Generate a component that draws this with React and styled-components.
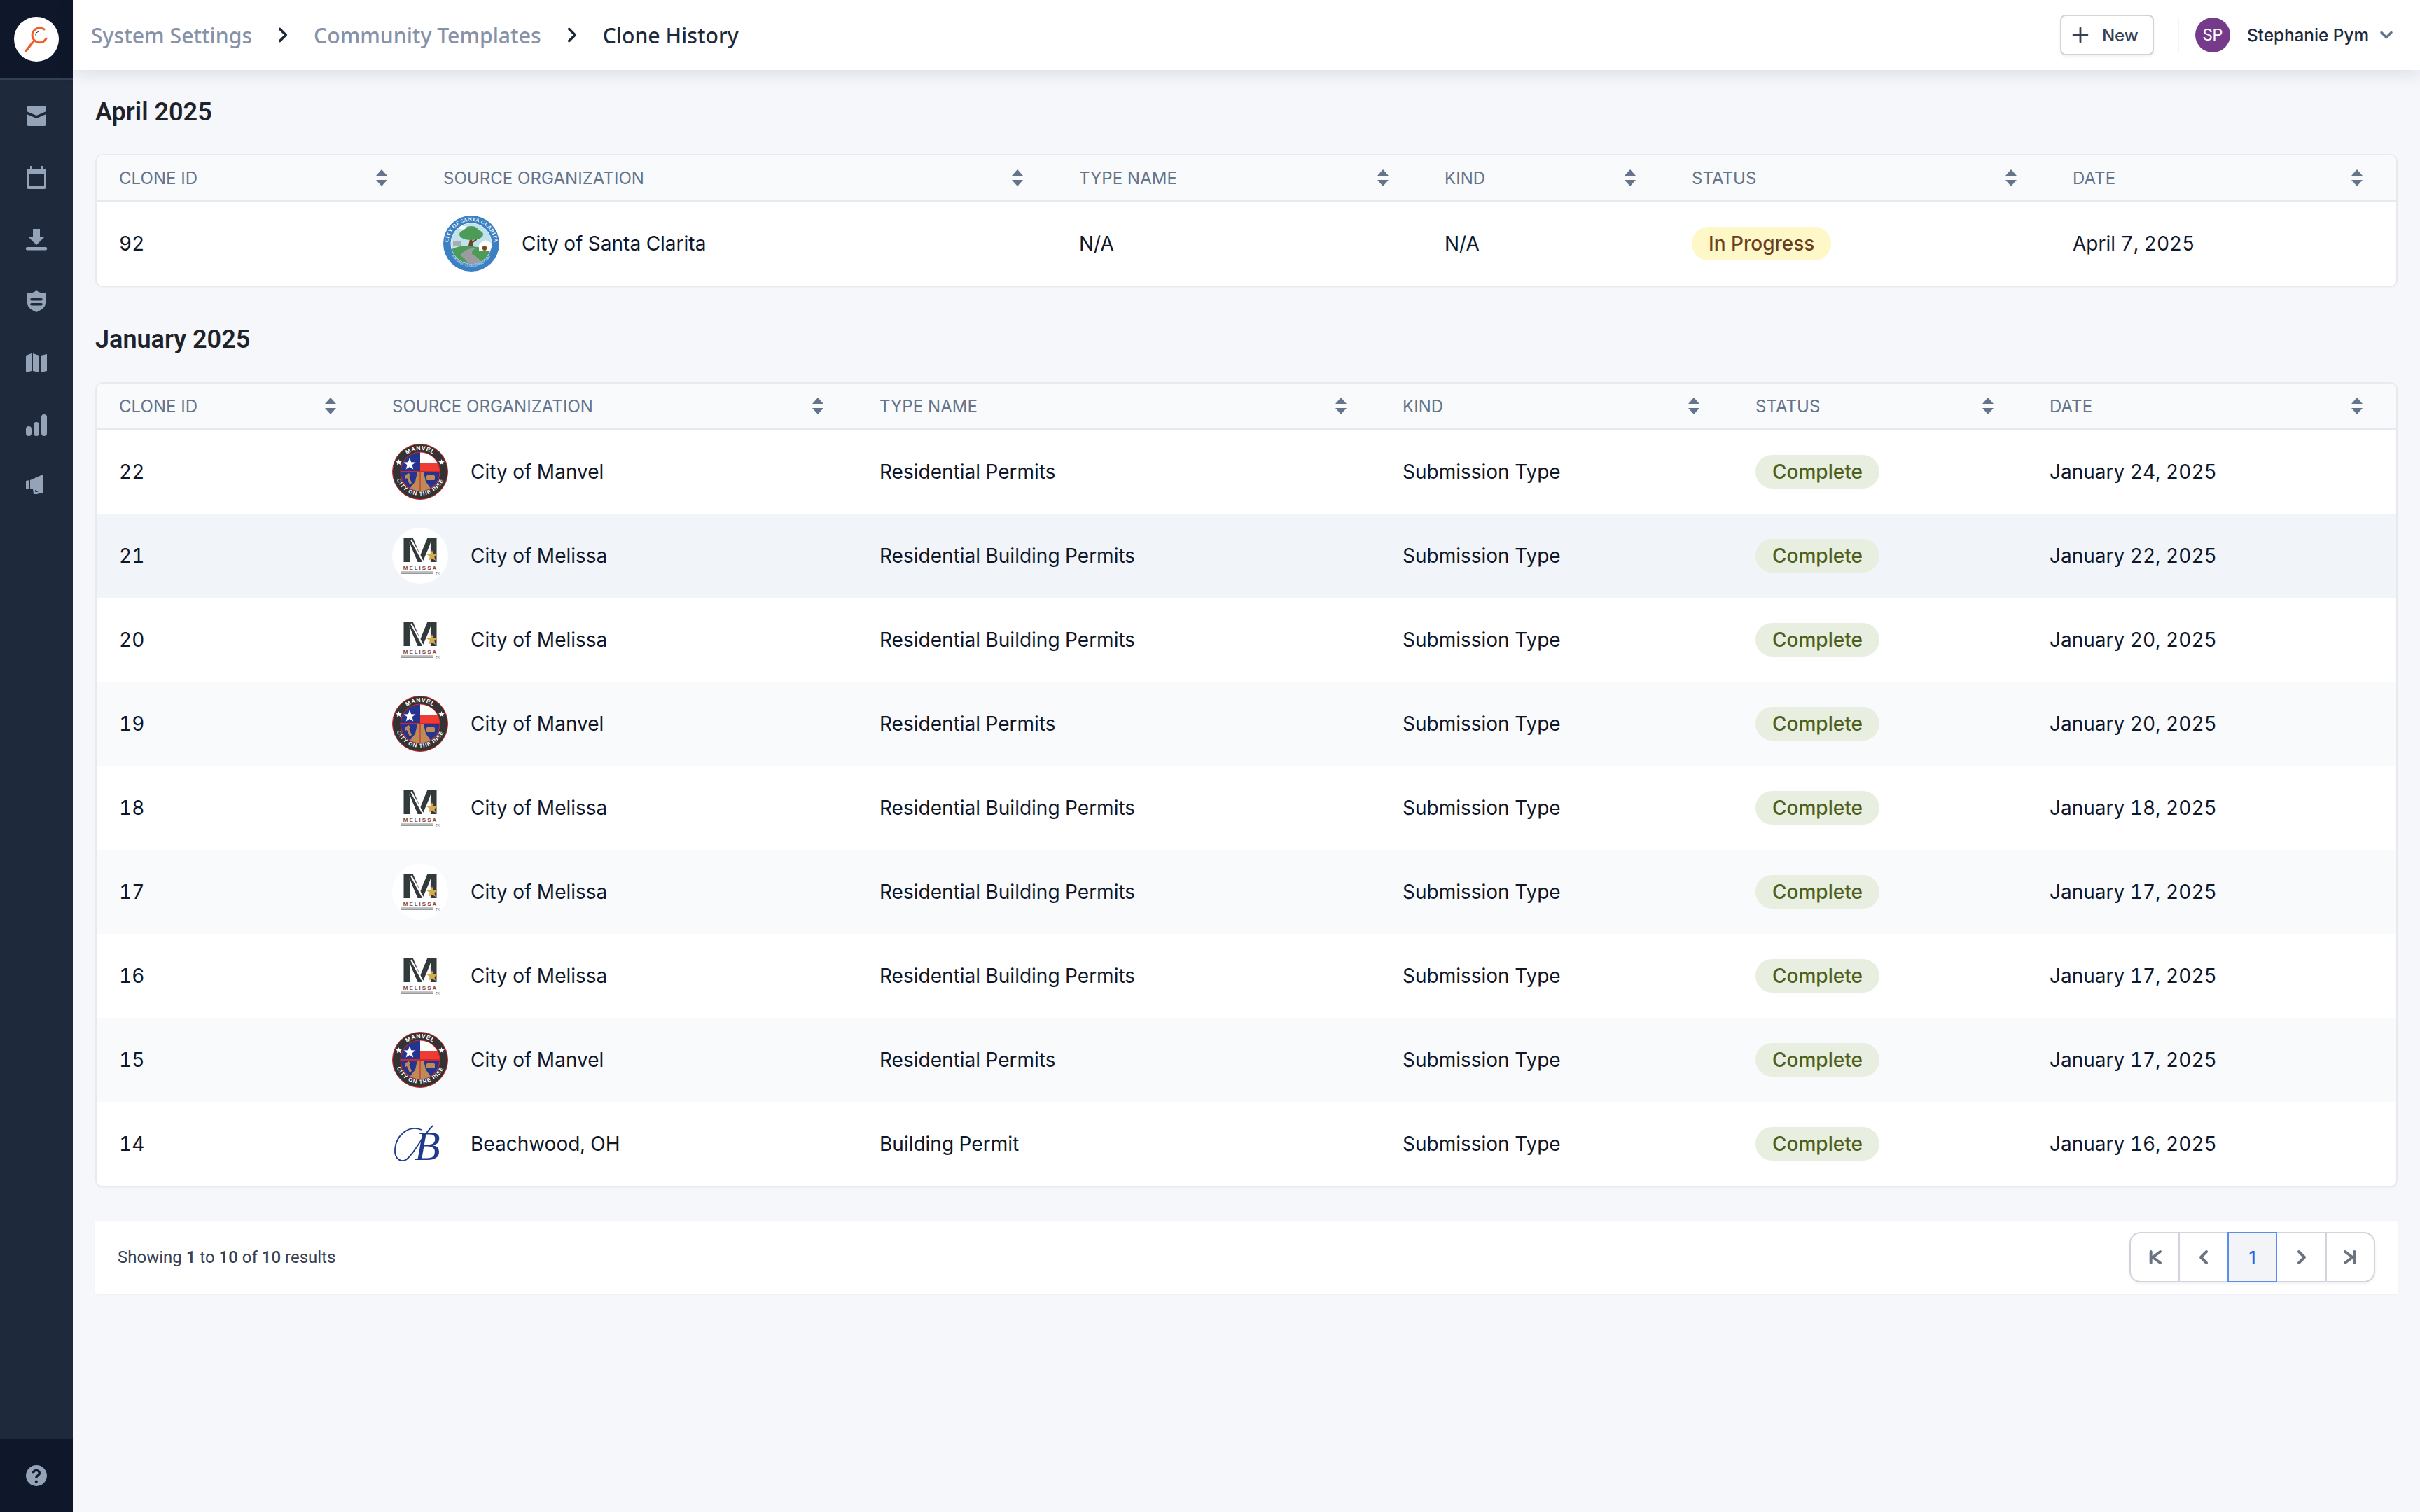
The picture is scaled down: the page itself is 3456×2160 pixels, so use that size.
import React from 'react';
import styled, { createGlobalStyle } from 'styled-components';
import { Plus, ChevronDown, ChevronRight, ChevronLeft } from 'lucide-react';

const Global = createGlobalStyle`
  * { box-sizing: border-box; }
  html, body { margin: 0; padding: 0; height: 100%; }
  body { background: #f5f7fb; font-family: Inter, "Liberation Sans", sans-serif; color: #0f172a; }
`;

const Shell = styled.div`
  display: flex;
  width: 3456px;
  height: 2160px;
  overflow: hidden;
`;

const Sidebar = styled.aside`
  width: 104px;
  flex: none;
  display: flex;
  flex-direction: column;
  background: #1e293b;
`;

const SideTop = styled.div`
  height: 114px;
  flex: none;
  display: flex;
  justify-content: center;
  padding-top: 24px;
  background: #0f172a;
  border-bottom: 2px solid #334155;
`;

const LogoDisc = styled.div`
  width: 64px;
  height: 64px;
  border-radius: 50%;
  background: #fff;
`;

const SideNav = styled.nav`
  flex: 1;
  display: flex;
  flex-direction: column;
  align-items: center;
  gap: 48px;
  padding-top: 32px;
`;

const SideIcon = styled.svg`
  width: 40px;
  height: 40px;
  display: block;
  fill: #94a3b8;
`;

const SideBottom = styled.div`
  height: 104px;
  flex: none;
  display: flex;
  align-items: center;
  justify-content: center;
  background: #0f172a;
`;

const Main = styled.div`
  flex: 1;
  min-width: 0;
  display: flex;
  flex-direction: column;
`;

const TopBar = styled.header`
  height: 100px;
  flex: none;
  display: flex;
  align-items: center;
  padding: 0 34px 0 26px;
  background: #fff;
  box-shadow: 0 4px 24px rgba(15, 23, 42, 0.12);
  position: relative;
  z-index: 1;
`;

const Crumb = styled.span`
  font-family: "Noto Sans", sans-serif;
  font-size: 30.2px;
  font-weight: 500;
  color: ${p => (p.$current ? '#1e293b' : '#8792a8')};
`;

const CrumbSep = styled(ChevronRight)`
  width: 34px;
  height: 34px;
  margin: 0 27px;
  color: #1e293b;
  stroke-width: 2.6;
  flex: none;
`;

const Spacer = styled.div`
  flex: 1;
`;

const NewButton = styled.button`
  width: 134px;
  height: 58px;
  display: flex;
  align-items: center;
  padding: 0 0 0 10px;
  gap: 14px;
  background: #fff;
  border: 2px solid #d1d5db;
  border-radius: 8px;
  box-shadow: 0 2px 4px rgba(15, 23, 42, 0.06);
  font-family: Inter, sans-serif;
  font-size: 24px;
  font-weight: 500;
  color: #374151;
`;

const Divider = styled.div`
  width: 2px;
  height: 50px;
  background: #f3f4f6;
  margin: 0 23px 0 34px;
`;

const Avatar = styled.div`
  width: 50px;
  height: 50px;
  border-radius: 50%;
  background: #763a8b;
  color: #fff;
  font-family: Roboto, sans-serif;
  font-size: 23px;
  display: flex;
  align-items: center;
  justify-content: center;
`;

const UserName = styled.span`
  font-family: Inter, sans-serif;
  font-size: 24.3px;
  font-weight: 500;
  color: #1e293b;
  margin-left: 24px;
`;

const UserChevron = styled(ChevronDown)`
  width: 28px;
  height: 28px;
  color: #64748b;
  stroke-width: 3;
  margin-left: 11px;
`;

const Content = styled.main`
  flex: 1;
  padding: 0 32px;
  display: flex;
  flex-direction: column;
`;

const Heading = styled.h2`
  margin: 0;
  height: ${p => p.$h}px;
  padding-top: ${p => p.$top}px;
  font-family: Roboto, sans-serif;
  font-size: 36px;
  font-weight: 600;
  line-height: 42px;
  color: #1f2329;
`;

const Card = styled.section`
  background: #fff;
  border-radius: 8px;
  box-shadow: 0 0 0 2px #e8eaef, 0 2px 4px rgba(15, 23, 42, 0.06);
  margin: 0 2px;
  overflow: hidden;
`;

const Row = styled.div`
  display: grid;
  grid-template-columns: ${p => p.$cols};
  height: 120px;
  align-items: center;
  background: ${p => p.$bg || '#fff'};
`;

const HeadRow = styled.div`
  display: grid;
  grid-template-columns: ${p => p.$cols};
  height: 66px;
  align-items: center;
  background: #f8fafc;
  border-bottom: 2px solid #e5e9f0;
`;

const HeadCell = styled.div`
  display: flex;
  align-items: center;
  justify-content: space-between;
  padding: 0 44px 0 32px;
  font-family: Inter, sans-serif;
  font-size: 24px;
  font-weight: 400;
  letter-spacing: 0.05px;
  color: #64748b;
  text-transform: uppercase;
`;

const Cell = styled.div`
  display: flex;
  align-items: center;
  gap: 32px;
  padding: 0 32px;
  font-family: Inter, sans-serif;
  font-size: 28px;
  font-variant-numeric: tabular-nums;
  color: #0f172a;
`;

const Pill = styled.span`
  display: inline-flex;
  align-items: center;
  height: 48px;
  padding: 0 24px;
  border-radius: 24px;
  font-weight: 500;
  background: ${p => (p.$kind === 'progress' ? '#fef7c8' : '#e8eee0')};
  color: ${p => (p.$kind === 'progress' ? '#6b3f1d' : '#4d5f1c')};
`;

const LogoSvg = styled.svg`
  width: 80px;
  height: 80px;
  flex: none;
  display: block;
`;

const Footer = styled.div`
  height: 104px;
  margin-top: 50px;
  display: flex;
  align-items: center;
  justify-content: space-between;
  padding: 0 32px;
  background: #fff;
  box-shadow: 0 1px 3px rgba(15, 23, 42, 0.06);
`;

const Showing = styled.p`
  margin: 0;
  font-family: Roboto, sans-serif;
  font-size: 24px;
  color: #374151;
  b { font-weight: 500; }
`;

const Pager = styled.div`
  display: flex;
  height: 72px;
  border: 2px solid #d1d5db;
  border-radius: 16px;
  background: #fff;
  box-shadow: 0 2px 4px rgba(15, 23, 42, 0.06);
`;

const PageBtn = styled.div`
  width: ${p => p.$w}px;
  display: flex;
  align-items: center;
  justify-content: center;
  color: #6b7280;
  border-left: ${p => (p.$bar ? '2px solid #d1d5db' : 'none')};
`;

const PageCurrent = styled.div`
  width: 71px;
  margin: -2px 0;
  display: flex;
  align-items: center;
  justify-content: center;
  background: #f3f4f8;
  border: 2px solid #5b8def;
  color: #2563eb;
  font-family: Inter, sans-serif;
  font-size: 24px;
  font-weight: 500;
`;

const PageGlyph = styled.svg`
  width: 32px;
  height: 32px;
  fill: none;
  stroke: currentColor;
  stroke-width: 3;
  stroke-linecap: round;
  stroke-linejoin: round;
`;

const SortSvg = styled.svg`
  width: 24px;
  height: 26px;
  fill: #64748b;
  flex: none;
`;

const Sort = () => (
  <SortSvg viewBox="0 0 24 26"><path d="M12 1 L20 10 H4 Z M12 25 L4 16 H20 Z" /></SortSvg>
);

const Clarita = () => (
  <LogoSvg viewBox="0 0 80 80">
    <defs>
      <path id="cl-top" d="M9 52 A33 33 0 1 1 71 52" />
      <path id="cl-bot" d="M8 48 A33 33 0 0 0 72 48" />
      <clipPath id="cl-in"><circle cx="40" cy="40" r="29" /></clipPath>
    </defs>
    <circle cx="40" cy="40" r="40" fill="#3a80c3" />
    <circle cx="40" cy="40" r="29.5" fill="#fff" />
    <circle cx="40" cy="40" r="29" fill="#bfe2ee" />
    <g clipPath="url(#cl-in)">
      <path d="M8 50 Q24 41 42 44 T74 48 V74 H8Z" fill="#4c9c58" />
      <path d="M24 57 Q30 47 48 46 Q38 51 42 56 Q52 60 58 72 H36 Q34 62 24 57Z" fill="#9b9ba0" />
      <rect x="14" y="37" width="11" height="6" fill="#a7adb0" />
      <path d="M38 34 h3 l2 9 h-7 Z M41 37 L48 33 L48 35 L41 40Z" fill="#6b4423" />
      <ellipse cx="40" cy="27" rx="17" ry="8" fill="#4c9c58" />
      <ellipse cx="40" cy="21" rx="10" ry="6" fill="#4c9c58" />
      <rect x="51" y="41" width="19" height="9" fill="#fff" />
      <path d="M50 41 L60 35 L72 41Z" fill="#fff" />
      <rect x="56" y="43" width="6" height="7" rx="3" fill="#7a4a1f" />
      <ellipse cx="27" cy="17" rx="6" ry="2.4" fill="#fff" />
    </g>
    <text fontFamily="Liberation Serif, serif" fontSize="7.5" fontWeight="700" fill="#fff" letterSpacing=".3"><textPath href="#cl-top" startOffset="50%" textAnchor="middle">CITY OF SANTA CLARITA</textPath></text>
    <text fontFamily="Liberation Sans, sans-serif" fontSize="4.4" fill="#e5f2fb"><textPath href="#cl-bot" startOffset="50%" textAnchor="middle">FOUNDED 15 DECEMBER 1987</textPath></text>
  </LogoSvg>
);

const Manvel = () => (
  <LogoSvg viewBox="0 0 80 80">
    <defs>
      <path id="mv-top" d="M9 40 A31 31 0 0 1 71 40" />
      <path id="mv-bot" d="M4 38 A36 36 0 0 0 76 38" />
      <clipPath id="mv-in"><circle cx="40" cy="40" r="27.5" /></clipPath>
    </defs>
    <circle cx="40" cy="40" r="39.5" fill="#333" stroke="#d3262d" strokeWidth="1" />
    <circle cx="40" cy="40" r="28.5" fill="#d3262d" />
    <g clipPath="url(#mv-in)">
      <rect x="12" y="12" width="28" height="27" fill="#25358f" />
      <rect x="40" y="12" width="28" height="15" fill="#fff" />
      <rect x="40" y="27" width="28" height="12" fill="#ee3b34" />
      <rect x="12" y="41" width="56" height="28" fill="#25358f" />
      <path d="M36 41 H45 L48 54 L58 68 H22 L33 54Z" fill="#c08a58" />
      <rect x="39.4" y="41" width="1.2" height="28" fill="#c8322b" />
      <path d="M18 45 l6 -3 2 4 -2 1 4 9 -3 2 -4 -9 -2 1Z" fill="#c08a58" />
      <rect x="49" y="45" width="12" height="7" rx="1.5" fill="#c08a58" />
      <polygon points="25,20 27.2,26.2 33.6,26.4 28.5,30.3 30.3,36.5 25,32.9 19.7,36.5 21.5,30.3 16.4,26.4 22.8,26.2" fill="#fff" />
    </g>
    <rect x="12" y="39" width="56" height="2" fill="#d3262d" />
    <text fontFamily="Liberation Sans, sans-serif" fontSize="8.5" fontWeight="700" fill="#fff" letterSpacing=".8"><textPath href="#mv-top" startOffset="50%" textAnchor="middle">MANVEL</textPath></text>
    <text fontFamily="Liberation Sans, sans-serif" fontSize="7.8" fontWeight="700" fill="#fff" letterSpacing="1"><textPath href="#mv-bot" startOffset="50%" textAnchor="middle">CITY ON THE RISE</textPath></text>
    <polygon points="9.5,22 10.7,25 13.9,25.2 11.4,27.2 12.3,30.3 9.5,28.5 6.7,30.3 7.6,27.2 5.1,25.2 8.3,25" fill="#fff" />
    <polygon points="70.5,22 71.7,25 74.9,25.2 72.4,27.2 73.3,30.3 70.5,28.5 67.7,30.3 68.6,27.2 66.1,25.2 69.3,25" fill="#fff" />
  </LogoSvg>
);

const Melissa = () => (
  <LogoSvg viewBox="0 0 80 80">
    <circle cx="40" cy="40" r="40" fill="#fff" />
    <text x="40" y="49" textAnchor="middle" fontFamily="Liberation Sans, sans-serif" fontWeight="700" fontSize="50" fill="#333a3c" textLength="56" lengthAdjust="spacingAndGlyphs">M</text>
    <path d="M27 17 L45 50" stroke="#fff" strokeWidth="2.2" />
    <polygon points="57,32 59,37.6 65,37.8 60.3,41.4 62,47 57,43.8 52,47 53.7,41.4 49,37.8 55,37.6" fill="#d9a94e" />
    <text x="40.5" y="59.5" textAnchor="middle" fontFamily="Liberation Sans, sans-serif" fontSize="8" fontWeight="700" letterSpacing="2" fill="#86463f">MELISSA</text>
    <rect x="12" y="62.5" width="46" height="1.1" fill="#8a8f90" />
    <rect x="12" y="64.8" width="46" height="1.1" fill="#8a8f90" />
    <text x="65" y="67" textAnchor="middle" fontFamily="Liberation Sans, sans-serif" fontSize="4.5" fill="#666">TX</text>
  </LogoSvg>
);

const Beachwood = () => (
  <LogoSvg viewBox="0 0 80 80">
    <circle cx="40" cy="40" r="40" fill="#fff" />
    <path d="M42 20 C22 12 5 30 4 48 C3 62 14 69 23 60 C34 50 42 30 58 14" fill="none" stroke="#1e3a8a" strokeWidth="1.8" />
    <text x="32" y="63" fontFamily="Liberation Serif, serif" fontStyle="italic" fontSize="60" fill="#1e3a8a">B</text>
  </LogoSvg>
);

const LOGOS = { clarita: Clarita, manvel: Manvel, melissa: Melissa, beachwood: Beachwood };
const HEAD = ['Clone ID', 'Source Organization', 'Type Name', 'Kind', 'Status', 'Date'];

const april = {
  cols: '463px 908px 522px 353px 544px 1fr',
  rows: [
    { id: 92, logo: 'clarita', org: 'City of Santa Clarita', type: 'N/A', kind: 'N/A', status: 'In Progress', date: 'April 7, 2025' },
  ],
};

const sub = 'Submission Type';
const rbp = 'Residential Building Permits';
const january = {
  cols: '390px 696px 747px 504px 420px 1fr',
  rows: [
    { id: 22, logo: 'manvel', org: 'City of Manvel', type: 'Residential Permits', kind: sub, status: 'Complete', date: 'January 24, 2025' },
    { id: 21, logo: 'melissa', org: 'City of Melissa', type: rbp, kind: sub, status: 'Complete', date: 'January 22, 2025', bg: '#f1f5f9' },
    { id: 20, logo: 'melissa', org: 'City of Melissa', type: rbp, kind: sub, status: 'Complete', date: 'January 20, 2025' },
    { id: 19, logo: 'manvel', org: 'City of Manvel', type: 'Residential Permits', kind: sub, status: 'Complete', date: 'January 20, 2025', bg: '#f8fafc' },
    { id: 18, logo: 'melissa', org: 'City of Melissa', type: rbp, kind: sub, status: 'Complete', date: 'January 18, 2025' },
    { id: 17, logo: 'melissa', org: 'City of Melissa', type: rbp, kind: sub, status: 'Complete', date: 'January 17, 2025', bg: '#f8fafc' },
    { id: 16, logo: 'melissa', org: 'City of Melissa', type: rbp, kind: sub, status: 'Complete', date: 'January 17, 2025' },
    { id: 15, logo: 'manvel', org: 'City of Manvel', type: 'Residential Permits', kind: sub, status: 'Complete', date: 'January 17, 2025', bg: '#f8fafc' },
    { id: 14, logo: 'beachwood', org: 'Beachwood, OH', type: 'Building Permit', kind: sub, status: 'Complete', date: 'January 16, 2025' },
  ],
};

const DataTable = ({ data }) => (
  <Card>
    <HeadRow $cols={data.cols}>
      {HEAD.map(h => <HeadCell key={h}>{h}<Sort /></HeadCell>)}
    </HeadRow>
    {data.rows.map(r => {
      const Logo = LOGOS[r.logo];
      return (
        <Row key={r.id} $cols={data.cols} $bg={r.bg}>
          <Cell>{r.id}</Cell>
          <Cell><Logo />{r.org}</Cell>
          <Cell>{r.type}</Cell>
          <Cell>{r.kind}</Cell>
          <Cell><Pill $kind={r.status === 'Complete' ? 'done' : 'progress'}>{r.status}</Pill></Cell>
          <Cell>{r.date}</Cell>
        </Row>
      );
    })}
  </Card>
);

const SIDE_ICONS = [
  'M6 8a3 3 0 0 1 3-3h22a3 3 0 0 1 3 3v5l-14 6-14-6V8Zm0 9 14 6 14-6v14a3 3 0 0 1-3 3H9a3 3 0 0 1-3-3V17Z',
  'M11 3h3v4h12V3h3v4h2a3 3 0 0 1 3 3v23a3 3 0 0 1-3 3H9a3 3 0 0 1-3-3V10a3 3 0 0 1 3-3h2V3ZM9 15v17h22V15H9Z',
  'M15 5h10v11h7L20 28 8 16h7V5ZM7 31h26a2.2 2.2 0 0 1 0 4.4H7A2.2 2.2 0 0 1 7 31Z',
  'M20 5c4 3 9 4 13 4v14c0 6-6 10-13 13C13 33 7 29 7 23V9c4 0 9-1 13-4Zm-7 11a1.8 1.8 0 0 0 0 3.6h14a1.8 1.8 0 0 0 0-3.6H13Zm0 7a1.8 1.8 0 0 0 0 3.6h14a1.8 1.8 0 0 0 0-3.6H13Z',
  'M5 10l8-3v25l-8 2V10Zm10-3 9 3v24l-9-2V7Zm11 3 9-2v24l-9 2V10Z',
  'M9 23a4 4 0 0 1 4 4v6a4 4 0 0 1-8 0v-6a4 4 0 0 1 4-4Zm11-6a4 4 0 0 1 4 4v12a4 4 0 0 1-8 0V21a4 4 0 0 1 4-4Zm11-11a4 4 0 0 1 4 4v23a4 4 0 0 1-8 0V10a4 4 0 0 1 4-4Z',
  'M29 4v27l-5-1c-1 2-3 2-5 2h-3l-1-7-4-1V12l18-8ZM5 13l5-1v13l-5-1V13Zm13 13 .5 3c1.5 0 3 0 4-1l-4.5-2Z',
];

export default function App() {
  return (
    <Shell>
      <Global />
      <Sidebar>
        <SideTop>
          <LogoDisc>
            <svg width="64" height="64" viewBox="0 0 64 64" fill="none" stroke="#ee5f2c" strokeLinecap="round" aria-label="logo">
              <path d="M46 31 A10.5 10.5 0 1 1 43 18" strokeWidth="3" />
              <path d="M27 36 L17 49" strokeWidth="3.4" />
              <path d="M30.5 26 Q31 22 35 21" stroke="#333" strokeWidth="1" />
            </svg>
          </LogoDisc>
        </SideTop>
        <SideNav>
          {SIDE_ICONS.map(d => <SideIcon key={d} viewBox="0 0 40 40"><path fillRule="evenodd" d={d} /></SideIcon>)}
        </SideNav>
        <SideBottom>
          <SideIcon viewBox="0 0 40 40">
            <path fillRule="evenodd" d="M20 5a15 15 0 1 1 0 30 15 15 0 0 1 0-30Zm0 6c-3.6 0-6 2-6.2 5.2h3.4c.2-1.4 1.2-2.2 2.7-2.2s2.6.9 2.6 2.2c0 1.1-.6 1.8-2 2.8-1.7 1.2-2.3 2.4-2.3 4.5v.5h3.3v-.4c0-1.2.4-1.8 1.9-2.9 1.7-1.2 2.6-2.5 2.6-4.5 0-3.1-2.4-5.2-6-5.2Zm-.2 15.5a2.1 2.1 0 1 0 0 4.2 2.1 2.1 0 0 0 0-4.2Z" />
          </SideIcon>
        </SideBottom>
      </Sidebar>
      <Main>
        <TopBar>
          <Crumb>System Settings</Crumb>
          <CrumbSep />
          <Crumb>Community Templates</Crumb>
          <CrumbSep />
          <Crumb $current>Clone History</Crumb>
          <Spacer />
          <NewButton><Plus size={34} strokeWidth={2} />New</NewButton>
          <Divider />
          <Avatar>SP</Avatar>
          <UserName>Stephanie Pym</UserName>
          <UserChevron />
        </TopBar>
        <Content>
          <Heading $h={122} $top={39}>April 2025</Heading>
          <DataTable data={april} />
          <Heading $h={140} $top={56}>January 2025</Heading>
          <DataTable data={january} />
          <Footer>
            <Showing>Showing <b>1</b> to <b>10</b> of <b>10</b> results</Showing>
            <Pager>
              <PageBtn $w={68}><PageGlyph viewBox="0 0 24 24"><path d="M8 6v12M18 6l-8 6 8 6" /></PageGlyph></PageBtn>
              <PageBtn $w={70} $bar><ChevronLeft size={32} strokeWidth={3} /></PageBtn>
              <PageCurrent>1</PageCurrent>
              <PageBtn $w={69}><ChevronRight size={32} strokeWidth={3} /></PageBtn>
              <PageBtn $w={69} $bar><PageGlyph viewBox="0 0 24 24"><path d="M16 6v12M6 6l8 6-8 6" /></PageGlyph></PageBtn>
            </Pager>
          </Footer>
        </Content>
      </Main>
    </Shell>
  );
}
